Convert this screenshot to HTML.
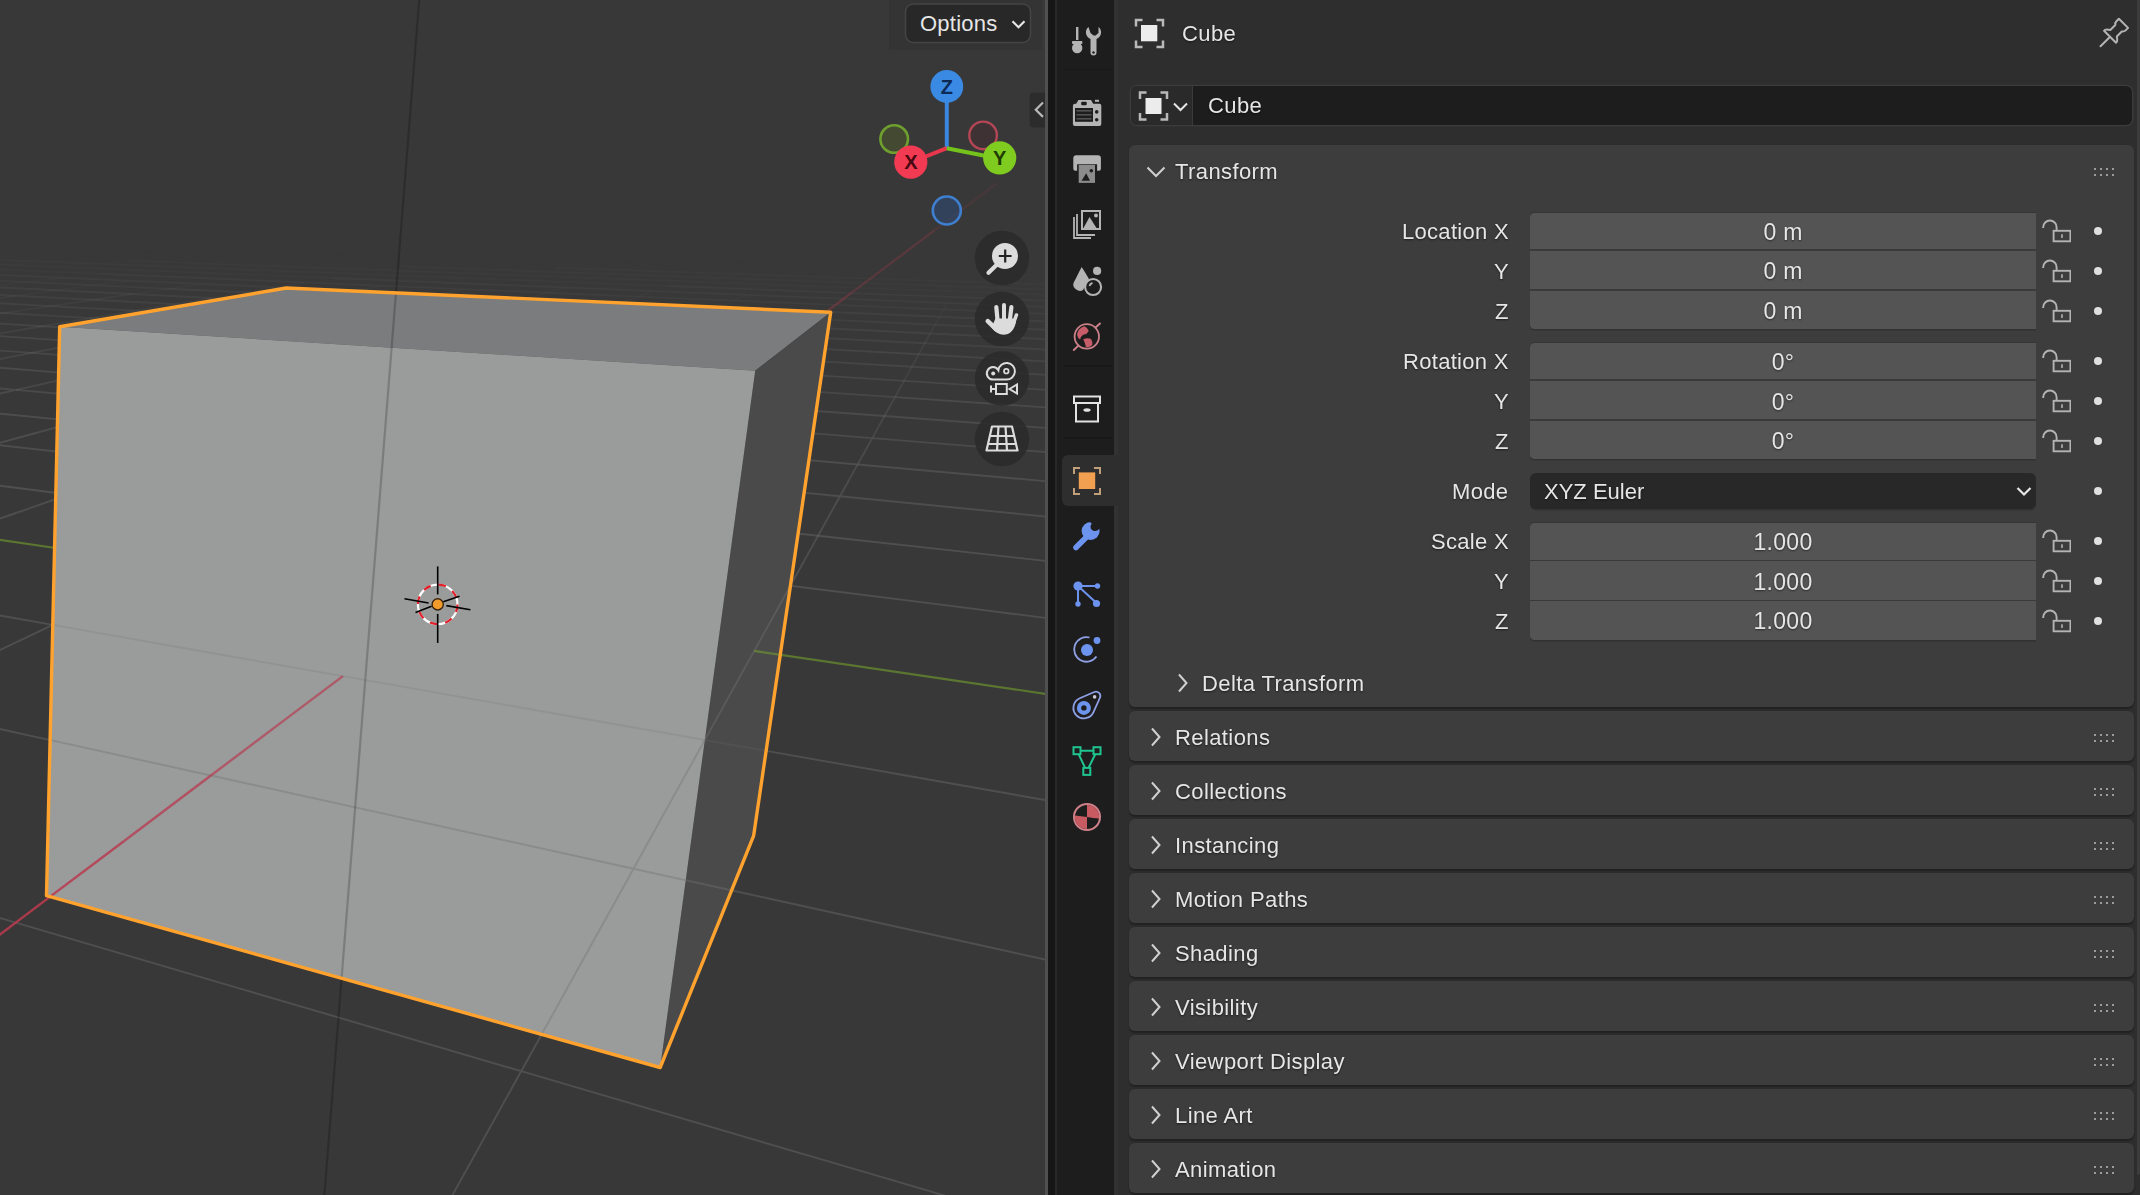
<!DOCTYPE html>
<html><head><meta charset="utf-8"><style>
*{margin:0;padding:0;box-sizing:border-box}
html,body{width:2140px;height:1195px;overflow:hidden;background:#161616;font-family:"Liberation Sans",sans-serif}
.t,.lbl,.val{will-change:transform}
#vp{position:absolute;left:0;top:0;width:1045px;height:1195px;overflow:hidden}
#edge{position:absolute;left:1045px;top:0;width:2.6px;height:1195px;background:#505050}
#gap{position:absolute;left:1047.6px;top:0;width:7px;height:1195px;background:#161616}
#gap2{position:absolute;left:1054.6px;top:0;width:2.6px;height:1195px;background:#282828}
#tabs{position:absolute;left:1057px;top:0;width:57px;height:1195px;background:#1d1d1d}
#props{position:absolute;left:1114px;top:0;width:1026px;height:1195px;background:#2e2e2e}
.t{position:absolute;color:#e6e6e6;font-size:22px;letter-spacing:0.4px;white-space:nowrap;text-shadow:0 1px 2px rgba(0,0,0,.55)}
.lbl{position:absolute;color:#e6e6e6;font-size:22px;letter-spacing:0.3px;white-space:nowrap;height:40px;line-height:41.5px;text-shadow:0 1px 2px rgba(0,0,0,.55)}
.panel{position:absolute;left:1129px;width:1005px;background:#3d3d3d;border-radius:6px;box-shadow:0 1.5px 1.5px rgba(0,0,0,.28)}
.fld{position:absolute;left:1530px;width:506px;background:#545454;border-radius:4.5px 0 0 4.5px;box-shadow:0 -1px 0 rgba(0,0,0,.12),0 1.5px 0 rgba(0,0,0,.18)}
.div{position:absolute;left:1530px;width:506px;height:1.8px;background:#3a3a3a}
.val{position:absolute;left:1530px;width:506px;height:40px;line-height:39.5px;text-align:center;color:#e6e6e6;font-size:23px;letter-spacing:0.3px;text-shadow:0 1px 2px rgba(0,0,0,.5)}
.dot{position:absolute;width:8px;height:8px;border-radius:4px;background:#e0e0e0}
.grip{position:absolute;width:22px;height:8px}
</style></head><body>
<div id="vp"><svg width="1045" height="1195" viewBox="0 0 1045 1195" style="position:absolute;left:0;top:0">
<defs><clipPath id="cubeclip"><polygon points="59.7,326.7 286.3,288.0 830.7,312.3 753.6,835.9 660.2,1067.5 46.5,895.7"/></clipPath></defs>
<rect width="1045" height="1195" fill="#383838"/>
<g stroke="#727272" stroke-width="1.9" fill="none"><path d="M473.0 254.2L599.2 258.1M599.2 258.1L736.4 262.4M736.4 262.4L885.9 267.0M885.9 267.0L1049.5 272.0M1049.5 272.0L1229.3 277.6M226.7 249.7L337.0 253.2M337.0 253.2L456.3 257.0M456.3 257.0L585.8 261.1M585.8 261.1L726.9 265.6M726.9 265.6L881.1 270.6M881.1 270.6L1050.3 276.0M1050.3 276.0L1237.0 282.0M99.6 248.7L203.9 252.2M203.9 252.2L316.5 255.9M316.5 255.9L438.7 259.9M438.7 259.9L571.6 264.4M571.6 264.4L716.8 269.2M716.8 269.2L875.9 274.4M875.9 274.4L1051.3 280.3M1051.3 280.3L1245.3 286.7M-24.9 247.8L73.4 251.2M73.4 251.2L179.7 254.8M179.7 254.8L294.8 258.8M294.8 258.8L419.9 263.1M419.9 263.1L556.4 267.8M-54.4 250.2L45.7 253.8M45.7 253.8L154.0 257.7M154.0 257.7L271.7 261.9M271.7 261.9L399.9 266.4M-85.5 252.7L16.3 256.5M16.3 256.5L126.8 260.6M-118.5 255.4L-14.9 259.5M8.1 264.9L-62.9 272.1M66.8 267.2L33.7 270.9M33.7 270.9L-1.7 274.8M-1.7 274.8L-39.8 279.0M128.3 269.7L96.5 273.6M96.5 273.6L62.5 277.7M247.1 265.1L192.6 272.4M192.6 272.4L162.5 276.4M162.5 276.4L130.0 280.7M311.3 267.5L260.2 275.1M260.2 275.1L231.7 279.3M231.7 279.3L201.1 283.8M378.5 270.0L355.6 273.9M355.6 273.9L331.0 278.0M331.0 278.0L304.6 282.4M448.9 272.6L428.0 276.7M428.0 276.7L405.5 281.0M405.5 281.0L381.3 285.7M522.8 275.4L504.1 279.6M504.1 279.6L484.0 284.2M484.0 284.2L462.2 289.1M600.3 278.3L584.1 282.7M584.1 282.7L566.6 287.5M681.9 281.3L668.4 286.0M668.4 286.0L653.8 291.1M767.7 284.5L757.3 289.4M757.3 289.4L746.1 294.8M959.0 281.6L953.6 291.4M953.6 291.4L950.5 296.9M950.5 296.9L947.2 303.0M1052.3 284.8L1054.5 295.2M1054.5 295.2L1055.8 301.0M1055.8 301.0L1057.2 307.4" stroke-opacity="0.021"/>
<path d="M556.4 267.8L706.0 272.9M706.0 272.9L870.4 278.6M870.4 278.6L1052.3 284.8M1052.3 284.8L1254.3 291.8M399.9 266.4L540.2 271.5M540.2 271.5L694.3 277.0M694.3 277.0L777.3 279.9M777.3 279.9L864.5 283.1M864.5 283.1L956.4 286.3M956.4 286.3L1053.3 289.8M1053.3 289.8L1155.7 293.5M126.8 260.6L247.1 265.1M247.1 265.1L378.5 270.0M378.5 270.0L448.9 272.6M448.9 272.6L522.8 275.4M522.8 275.4L600.3 278.3M600.3 278.3L681.9 281.3M681.9 281.3L767.7 284.5M767.7 284.5L858.1 287.9M858.1 287.9L953.6 291.4M953.6 291.4L1054.5 295.2M1054.5 295.2L1161.4 299.2M-14.9 259.5L97.8 263.8M97.8 263.8L220.8 268.6M220.8 268.6L286.6 271.2M286.6 271.2L355.6 273.9M355.6 273.9L428.0 276.7M428.0 276.7L504.1 279.6M504.1 279.6L584.1 282.7M584.1 282.7L668.4 286.0M-48.1 262.6L66.8 267.2M66.8 267.2L128.3 269.7M128.3 269.7L192.6 272.4M192.6 272.4L260.2 275.1M260.2 275.1L331.0 278.0M-26.2 268.3L33.7 270.9M33.7 270.9L96.5 273.6M-62.9 272.1L-1.7 274.8M62.5 277.7L25.9 282.1M25.9 282.1L-13.6 286.8M-13.6 286.8L-56.4 292.0M130.0 280.7L95.1 285.3M95.1 285.3L57.3 290.3M57.3 290.3L16.3 295.8M201.1 283.8L168.1 288.7M168.1 288.7L132.2 294.0M304.6 282.4L276.0 287.2M276.0 287.2L245.1 292.3M245.1 292.3L211.6 298.0M381.3 285.7L355.1 290.7M355.1 290.7L326.6 296.2M462.2 289.1L438.6 294.4M438.6 294.4L413.0 300.2M566.6 287.5L547.7 292.7M547.7 292.7L527.1 298.4M527.1 298.4L504.6 304.5M653.8 291.1L638.1 296.6M638.1 296.6L620.9 302.5M620.9 302.5L602.1 309.1M746.1 294.8L733.8 300.6M733.8 300.6L720.5 307.0M947.2 303.0L943.6 309.5M943.6 309.5L939.6 316.7M1057.2 307.4L1058.7 314.4M1058.7 314.4L1060.4 322.1" stroke-opacity="0.063"/>
<path d="M668.4 286.0L757.3 289.4M757.3 289.4L851.2 293.1M851.2 293.1L950.5 296.9M950.5 296.9L1055.8 301.0M1055.8 301.0L1167.5 305.4M331.0 278.0L405.5 281.0M405.5 281.0L484.0 284.2M484.0 284.2L566.6 287.5M566.6 287.5L653.8 291.1M653.8 291.1L746.1 294.8M746.1 294.8L843.7 298.8M843.7 298.8L947.2 303.0M947.2 303.0L1057.2 307.4M1057.2 307.4L1174.2 312.2M96.5 273.6L162.5 276.4M162.5 276.4L231.7 279.3M231.7 279.3L304.6 282.4M304.6 282.4L381.3 285.7M381.3 285.7L462.2 289.1M462.2 289.1L547.7 292.7M547.7 292.7L638.1 296.6M638.1 296.6L733.8 300.6M733.8 300.6L835.5 304.9M835.5 304.9L943.6 309.5M943.6 309.5L1058.7 314.4M1058.7 314.4L1181.6 319.6M-1.7 274.8L62.5 277.7M62.5 277.7L130.0 280.7M130.0 280.7L201.1 283.8M201.1 283.8L276.0 287.2M276.0 287.2L355.1 290.7M-39.8 279.0L25.9 282.1M25.9 282.1L95.1 285.3M95.1 285.3L168.1 288.7M-80.8 283.5L-13.6 286.8M16.3 295.8L-28.4 301.7M132.2 294.0L93.3 299.8M93.3 299.8L50.8 306.1M50.8 306.1L4.2 313.0M211.6 298.0L175.0 304.1M175.0 304.1L135.0 310.8M326.6 296.2L295.7 302.1M295.7 302.1L261.8 308.6M261.8 308.6L224.7 315.8M413.0 300.2L385.0 306.5M385.0 306.5L354.4 313.5M504.6 304.5L480.1 311.2M480.1 311.2L453.1 318.6M602.1 309.1L581.4 316.2M581.4 316.2L558.7 324.2M720.5 307.0L705.9 313.9M705.9 313.9L689.8 321.6M939.6 316.7L935.1 324.7M935.1 324.7L930.3 333.5M1060.4 322.1L1062.2 330.6M1062.2 330.6L1064.3 340.1" stroke-opacity="0.105"/>
<path d="M355.1 290.7L438.6 294.4M438.6 294.4L527.1 298.4M527.1 298.4L620.9 302.5M620.9 302.5L720.5 307.0M720.5 307.0L826.5 311.7M826.5 311.7L939.6 316.7M939.6 316.7L1060.4 322.1M1060.4 322.1L1189.8 327.9M168.1 288.7L245.1 292.3M245.1 292.3L326.6 296.2M326.6 296.2L413.0 300.2M413.0 300.2L504.6 304.5M504.6 304.5L602.1 309.1M602.1 309.1L705.9 313.9M705.9 313.9L816.6 319.1M816.6 319.1L935.1 324.7M935.1 324.7L1062.2 330.6M1062.2 330.6L1198.8 337.1M-13.6 286.8L57.3 290.3M57.3 290.3L132.2 294.0M132.2 294.0L211.6 298.0M211.6 298.0L295.7 302.1M295.7 302.1L385.0 306.5M-56.4 292.0L16.3 295.8M16.3 295.8L93.3 299.8M4.2 313.0L-47.0 320.6M135.0 310.8L91.0 318.1M91.0 318.1L42.5 326.3M224.7 315.8L183.8 323.6M354.4 313.5L320.6 321.1M320.6 321.1L283.3 329.5M453.1 318.6L423.3 326.8M423.3 326.8L390.2 335.9M558.7 324.2L533.5 332.9M689.8 321.6L671.9 330.1M671.9 330.1L652.1 339.5M930.3 333.5L924.8 343.3M924.8 343.3L918.7 354.3M1064.3 340.1L1066.6 350.7" stroke-opacity="0.147"/>
<path d="M385.0 306.5L480.1 311.2M480.1 311.2L581.4 316.2M581.4 316.2L689.8 321.6M689.8 321.6L805.7 327.3M805.7 327.3L930.3 333.5M930.3 333.5L1064.3 340.1M1064.3 340.1L1209.0 347.3M93.3 299.8L175.0 304.1M175.0 304.1L261.8 308.6M261.8 308.6L354.4 313.5M354.4 313.5L453.1 318.6M453.1 318.6L558.7 324.2M558.7 324.2L671.9 330.1M671.9 330.1L793.6 336.5M793.6 336.5L924.8 343.3M924.8 343.3L1066.6 350.7M-28.4 301.7L50.8 306.1M50.8 306.1L135.0 310.8M135.0 310.8L224.7 315.8M224.7 315.8L320.6 321.1M-77.1 308.2L4.2 313.0M4.2 313.0L91.0 318.1M42.5 326.3L-11.4 335.3M-11.4 335.3L-71.5 345.3M183.8 323.6L138.5 332.3M138.5 332.3L88.0 342.1M283.3 329.5L241.8 338.9M241.8 338.9L195.4 349.4M390.2 335.9L353.3 346.0M533.5 332.9L505.5 342.7M505.5 342.7L474.0 353.6M652.1 339.5L630.0 350.1M630.0 350.1L605.0 361.9M918.7 354.3L911.8 366.8M911.8 366.8L904.0 380.9" stroke-opacity="0.189"/>
<path d="M320.6 321.1L423.3 326.8M423.3 326.8L533.5 332.9M533.5 332.9L652.1 339.5M652.1 339.5L780.1 346.6M780.1 346.6L918.7 354.3M918.7 354.3L1069.2 362.7M91.0 318.1L183.8 323.6M183.8 323.6L283.3 329.5M283.3 329.5L390.2 335.9M390.2 335.9L505.5 342.7M505.5 342.7L630.0 350.1M630.0 350.1L765.0 358.1M765.0 358.1L911.8 366.8M911.8 366.8L1072.1 376.3M-47.0 320.6L42.5 326.3M42.5 326.3L138.5 332.3M138.5 332.3L241.8 338.9M-103.7 329.0L-11.4 335.3M88.0 342.1L31.4 352.9M31.4 352.9L-32.4 365.2M195.4 349.4L143.2 361.2M353.3 346.0L311.9 357.3M311.9 357.3L265.0 370.2M474.0 353.6L438.5 366.0M438.5 366.0L398.1 380.0M605.0 361.9L576.7 375.4M904.0 380.9L895.0 397.1" stroke-opacity="0.231"/>
<path d="M241.8 338.9L353.3 346.0M353.3 346.0L474.0 353.6M474.0 353.6L605.0 361.9M605.0 361.9L747.8 371.0M747.8 371.0L904.0 380.9M904.0 380.9L1075.5 391.8M-11.4 335.3L88.0 342.1M88.0 342.1L195.4 349.4M195.4 349.4L311.9 357.3M311.9 357.3L438.5 366.0M438.5 366.0L576.7 375.4M576.7 375.4L728.2 385.8M728.2 385.8L895.0 397.1M-71.5 345.3L31.4 352.9M31.4 352.9L143.2 361.2M143.2 361.2L84.0 374.6M84.0 374.6L16.2 389.9M265.0 370.2L211.4 384.9M211.4 384.9L181.8 393.0M398.1 380.0L351.7 396.2M351.7 396.2L325.9 405.2M576.7 375.4L544.3 390.8M544.3 390.8L506.9 408.7M895.0 397.1L884.5 416.0M884.5 416.0L878.6 426.6M878.6 426.6L872.3 438.1" stroke-opacity="0.273"/>
<path d="M895.0 397.1L1079.4 409.7M143.2 361.2L265.0 370.2M265.0 370.2L398.1 380.0M398.1 380.0L544.3 390.8M544.3 390.8L705.6 402.8M705.6 402.8L792.7 409.2M792.7 409.2L884.5 416.0M884.5 416.0L981.5 423.2M981.5 423.2L1084.0 430.7M-32.4 365.2L84.0 374.6M84.0 374.6L211.4 384.9M211.4 384.9L279.9 390.4M279.9 390.4L351.7 396.2M351.7 396.2L427.3 402.3M427.3 402.3L506.9 408.7M506.9 408.7L590.8 415.4M590.8 415.4L679.4 422.6M679.4 422.6L773.0 430.1M773.0 430.1L872.3 438.1M872.3 438.1L977.5 446.6M977.5 446.6L1089.4 455.6M-45.8 384.4L16.2 389.9M16.2 389.9L81.3 395.7M81.3 395.7L149.8 401.8M16.2 389.9L-21.5 398.4M181.8 393.0L149.8 401.8M149.8 401.8L115.4 411.2M115.4 411.2L78.1 421.4M78.1 421.4L37.7 432.5M325.9 405.2L298.0 414.9M298.0 414.9L267.8 425.4M267.8 425.4L234.9 436.8M506.9 408.7L485.9 418.7M485.9 418.7L463.1 429.5M463.1 429.5L438.4 441.3M438.4 441.3L411.3 454.2M872.3 438.1L865.3 450.7M865.3 450.7L857.6 464.5M857.6 464.5L849.2 479.6" stroke-opacity="0.315"/>
<path d="M149.8 401.8L222.0 408.1M222.0 408.1L298.0 414.9M298.0 414.9L378.3 422.0M378.3 422.0L463.1 429.5M463.1 429.5L553.0 437.5M553.0 437.5L648.4 445.9M648.4 445.9L749.7 454.9M749.7 454.9L857.6 464.5M857.6 464.5L972.8 474.7M972.8 474.7L1095.9 485.6M-62.1 407.6L6.1 414.3M6.1 414.3L78.1 421.4M78.1 421.4L154.3 428.9M154.3 428.9L234.9 436.8M234.9 436.8L320.4 445.2M320.4 445.2L411.3 454.2M411.3 454.2L508.1 463.7M508.1 463.7L611.3 473.8M611.3 473.8L721.7 484.7M721.7 484.7L840.0 496.3M840.0 496.3L967.0 508.8M967.0 508.8L1103.9 522.3M37.7 432.5L-6.4 444.6M-6.4 444.6L-54.5 457.8M-82.1 436.2L-6.4 444.6M-6.4 444.6L74.1 453.5M74.1 453.5L159.8 462.9M159.8 462.9L251.3 473.0M251.3 473.0L349.0 483.9M234.9 436.8L199.1 449.3M199.1 449.3L159.8 462.9M159.8 462.9L116.7 478.0M116.7 478.0L69.0 494.5M69.0 494.5L16.1 513.0M411.3 454.2L381.6 468.3M381.6 468.3L349.0 483.9M349.0 483.9L312.8 501.1M312.8 501.1L272.6 520.2M849.2 479.6L840.0 496.3M840.0 496.3L829.6 514.9M829.6 514.9L818.1 535.7M818.1 535.7L805.1 559.1" stroke-opacity="0.357"/>
<path d="M349.0 483.9L453.7 495.4M453.7 495.4L566.2 507.9M566.2 507.9L687.3 521.3M687.3 521.3L818.1 535.7M818.1 535.7L959.9 551.4M959.9 551.4L1113.9 568.5M16.1 513.0L-43.1 533.5M-22.2 483.0L69.0 494.5M69.0 494.5L167.0 506.9M167.0 506.9L272.6 520.2M272.6 520.2L386.5 534.6M386.5 534.6L509.9 550.2M509.9 550.2L644.1 567.2M644.1 567.2L790.4 585.7M790.4 585.7L950.7 605.9M950.7 605.9L1126.9 628.2M272.6 520.2L227.5 541.7M227.5 541.7L176.7 565.9M176.7 565.9L118.9 593.4M118.9 593.4L52.8 624.9M52.8 624.9L-23.8 661.3M-71.7 602.9L52.8 624.9M52.8 624.9L190.3 649.2M190.3 649.2L342.9 676.1M342.9 676.1L513.3 706.2M513.3 706.2L704.8 740.0M704.8 740.0L921.6 778.3M921.6 778.3L1169.1 822.0M805.1 559.1L790.4 585.7M790.4 585.7L773.6 616.0M773.6 616.0L754.2 650.9M754.2 650.9L731.6 691.8M731.6 691.8L704.8 740.0M704.8 740.0L672.7 797.9M672.7 797.9L633.5 868.7M633.5 868.7L584.4 957.3M584.4 957.3L521.2 1071.2M521.2 1071.2L436.9 1223.1M-113.4 704.0L38.8 737.6M38.8 737.6L210.9 775.5M210.9 775.5L407.3 818.9M407.3 818.9L633.5 868.7M633.5 868.7L896.6 926.8M896.6 926.8L1206.7 995.2M-179.9 865.2L15.7 922.6M15.7 922.6L246.0 990.3M246.0 990.3L521.2 1071.2M521.2 1071.2L855.7 1169.4M855.7 1169.4L1271.1 1291.5" stroke-opacity="0.399"/></g>
<path d="M998.7 181.9L998.6 182.0M998.6 182.0L998.5 182.1M998.5 182.1L998.4 182.1M998.4 182.1L998.4 182.2M998.4 182.2L998.3 182.3M998.3 182.3L998.2 182.3M998.2 182.3L998.1 182.4M998.1 182.4L998.0 182.5M998.0 182.5L997.9 182.5M997.9 182.5L997.8 182.6M997.8 182.6L997.7 182.7M997.7 182.7L997.6 182.7M997.6 182.7L997.5 182.8M997.5 182.8L997.4 182.9M997.4 182.9L997.4 183.0M997.4 183.0L997.3 183.0M997.3 183.0L997.2 183.1M997.2 183.1L997.1 183.2M997.1 183.2L997.0 183.2M997.0 183.2L996.9 183.3M996.9 183.3L996.8 183.4M996.8 183.4L996.7 183.5M996.7 183.5L996.6 183.5M996.6 183.5L996.5 183.6M996.5 183.6L996.4 183.7M996.4 183.7L996.3 183.8M996.3 183.8L996.2 183.8" stroke="#c03a50" stroke-width="2.4" stroke-opacity="0.045" fill="none"/>
<path d="M996.2 183.8L996.1 183.9M996.1 183.9L996.0 184.0M996.0 184.0L995.9 184.1M995.9 184.1L995.8 184.2M995.8 184.2L995.7 184.2M995.7 184.2L995.6 184.3M995.6 184.3L995.4 184.4M995.4 184.4L995.3 184.5M995.3 184.5L995.2 184.6M995.2 184.6L995.1 184.6M995.1 184.6L995.0 184.7M995.0 184.7L994.9 184.8M994.9 184.8L994.8 184.9M994.8 184.9L994.7 185.0M994.7 185.0L994.6 185.1M994.6 185.1L994.5 185.1M994.5 185.1L994.3 185.2M994.3 185.2L994.2 185.3M994.2 185.3L994.1 185.4M994.1 185.4L994.0 185.5M994.0 185.5L993.9 185.6M993.9 185.6L993.7 185.7M993.7 185.7L993.6 185.8M993.6 185.8L993.5 185.9M993.5 185.9L993.4 186.0M993.4 186.0L993.3 186.0M993.3 186.0L993.1 186.1M993.1 186.1L993.0 186.2M993.0 186.2L992.9 186.3M992.9 186.3L992.8 186.4M992.8 186.4L992.6 186.5M992.6 186.5L992.5 186.6M992.5 186.6L992.4 186.7M992.4 186.7L992.2 186.8M992.2 186.8L992.1 186.9M992.1 186.9L992.0 187.0M992.0 187.0L991.8 187.1M991.8 187.1L991.7 187.2M991.7 187.2L991.6 187.3M991.6 187.3L991.4 187.4M991.4 187.4L991.3 187.5M991.3 187.5L991.2 187.6M991.2 187.6L991.0 187.7M991.0 187.7L990.9 187.8M990.9 187.8L990.7 187.9M990.7 187.9L990.6 188.1M990.6 188.1L990.4 188.2M990.4 188.2L990.3 188.3M990.3 188.3L990.2 188.4M990.2 188.4L990.0 188.5M990.0 188.5L989.9 188.6M989.9 188.6L989.7 188.7M989.7 188.7L989.5 188.8M989.5 188.8L989.4 189.0M989.4 189.0L989.2 189.1M989.2 189.1L989.1 189.2M989.1 189.2L988.9 189.3M988.9 189.3L988.8 189.4M988.8 189.4L988.6 189.6M988.6 189.6L988.4 189.7M988.4 189.7L988.3 189.8M988.3 189.8L988.1 189.9M988.1 189.9L987.9 190.1M987.9 190.1L987.8 190.2M987.8 190.2L987.6 190.3M987.6 190.3L987.4 190.4M987.4 190.4L987.3 190.6M987.3 190.6L987.1 190.7M987.1 190.7L986.9 190.8M986.9 190.8L986.7 191.0M986.7 191.0L986.6 191.1M986.6 191.1L986.4 191.2M986.4 191.2L986.2 191.4M986.2 191.4L986.0 191.5M986.0 191.5L985.8 191.6M985.8 191.6L985.6 191.8M985.6 191.8L985.4 191.9M985.4 191.9L985.3 192.1M985.3 192.1L985.1 192.2M985.1 192.2L984.9 192.4M984.9 192.4L984.7 192.5M984.7 192.5L984.5 192.7M984.5 192.7L984.3 192.8M984.3 192.8L984.1 193.0M984.1 193.0L983.9 193.1M983.9 193.1L983.7 193.3M983.7 193.3L983.4 193.4M983.4 193.4L983.2 193.6M983.2 193.6L983.0 193.8M983.0 193.8L982.8 193.9M982.8 193.9L982.6 194.1M982.6 194.1L982.4 194.3M982.4 194.3L982.1 194.4M982.1 194.4L981.9 194.6M981.9 194.6L981.7 194.8M981.7 194.8L981.5 194.9M981.5 194.9L981.2 195.1M981.2 195.1L981.0 195.3M981.0 195.3L980.8 195.5M980.8 195.5L980.5 195.6M980.5 195.6L980.3 195.8M980.3 195.8L980.0 196.0M980.0 196.0L979.8 196.2M979.8 196.2L979.5 196.4M979.5 196.4L979.3 196.6M979.3 196.6L979.0 196.8M979.0 196.8L978.8 197.0M978.8 197.0L978.5 197.2M978.5 197.2L978.3 197.4M978.3 197.4L978.0 197.6M978.0 197.6L977.7 197.8M977.7 197.8L977.4 198.0M977.4 198.0L977.2 198.2M977.2 198.2L976.9 198.4M976.9 198.4L976.6 198.6M976.6 198.6L976.3 198.8M976.3 198.8L976.0 199.0M976.0 199.0L975.7 199.2M975.7 199.2L975.4 199.5M975.4 199.5L975.2 199.7M975.2 199.7L974.8 199.9M974.8 199.9L974.5 200.1M974.5 200.1L974.2 200.4M974.2 200.4L973.9 200.6M973.9 200.6L973.6 200.9M973.6 200.9L973.3 201.1M973.3 201.1L973.0 201.3M973.0 201.3L972.6 201.6M972.6 201.6L972.3 201.8M972.3 201.8L971.9 202.1M971.9 202.1L971.6 202.4M971.6 202.4L971.3 202.6M971.3 202.6L970.9 202.9M970.9 202.9L970.6 203.2M970.6 203.2L970.2 203.4M970.2 203.4L969.8 203.7M969.8 203.7L969.5 204.0M969.5 204.0L969.1 204.3M969.1 204.3L968.7 204.6M968.7 204.6L968.3 204.8M968.3 204.8L967.9 205.1M967.9 205.1L967.5 205.4M967.5 205.4L967.1 205.7M967.1 205.7L966.7 206.0M966.7 206.0L966.3 206.4M966.3 206.4L965.9 206.7M965.9 206.7L965.5 207.0M965.5 207.0L965.0 207.3M965.0 207.3L964.6 207.6M964.6 207.6L964.2 208.0M964.2 208.0L963.7 208.3M963.7 208.3L963.2 208.7M963.2 208.7L962.8 209.0M962.8 209.0L962.3 209.4M962.3 209.4L961.8 209.7M961.8 209.7L961.3 210.1M961.3 210.1L960.9 210.5M960.9 210.5L960.4 210.8M960.4 210.8L959.8 211.2M959.8 211.2L959.3 211.6M959.3 211.6L958.8 212.0M958.8 212.0L958.3 212.4M958.3 212.4L957.7 212.8M957.7 212.8L957.2 213.2M957.2 213.2L956.6 213.6M956.6 213.6L956.1 214.1M956.1 214.1L955.5 214.5M955.5 214.5L954.9 215.0M954.9 215.0L954.3 215.4M954.3 215.4L953.7 215.9M953.7 215.9L953.1 216.3M953.1 216.3L952.4 216.8M952.4 216.8L951.8 217.3M951.8 217.3L951.2 217.8M951.2 217.8L950.5 218.3M950.5 218.3L949.8 218.8M949.8 218.8L949.1 219.3M949.1 219.3L948.4 219.8M948.4 219.8L947.7 220.4M947.7 220.4L947.0 220.9M947.0 220.9L946.3 221.5M946.3 221.5L945.5 222.0M945.5 222.0L944.7 222.6M944.7 222.6L944.0 223.2M944.0 223.2L943.2 223.8M943.2 223.8L942.4 224.4M942.4 224.4L941.5 225.0M941.5 225.0L940.7 225.7M940.7 225.7L939.8 226.3M939.8 226.3L938.9 227.0M938.9 227.0L938.0 227.7M938.0 227.7L937.1 228.3M937.1 228.3L936.2 229.1M936.2 229.1L935.2 229.8M935.2 229.8L934.3 230.5" stroke="#c03a50" stroke-width="2.4" stroke-opacity="0.135" fill="none"/>
<path d="M934.3 230.5L933.3 231.3M933.3 231.3L932.2 232.0M932.2 232.0L931.2 232.8M931.2 232.8L930.1 233.6M930.1 233.6L929.0 234.4M929.0 234.4L927.9 235.3M927.9 235.3L926.8 236.1M926.8 236.1L925.6 237.0M925.6 237.0L924.4 237.9M924.4 237.9L923.2 238.9M923.2 238.9L921.9 239.8M921.9 239.8L920.6 240.8M920.6 240.8L919.3 241.8M919.3 241.8L917.9 242.8M917.9 242.8L916.6 243.8M916.6 243.8L915.1 244.9M915.1 244.9L913.7 246.0M913.7 246.0L912.2 247.2M912.2 247.2L910.6 248.3M910.6 248.3L909.0 249.5M909.0 249.5L907.4 250.7M907.4 250.7L905.7 252.0M905.7 252.0L904.0 253.3M904.0 253.3L902.2 254.7M902.2 254.7L900.4 256.0M900.4 256.0L898.5 257.5M898.5 257.5L896.5 258.9M896.5 258.9L894.5 260.4M894.5 260.4L892.5 262.0M892.5 262.0L890.3 263.6M890.3 263.6L888.1 265.3M888.1 265.3L885.9 267.0M885.9 267.0L883.5 268.7M883.5 268.7L881.1 270.6M881.1 270.6L878.6 272.5M878.6 272.5L875.9 274.4M875.9 274.4L873.2 276.5M873.2 276.5L870.4 278.6M870.4 278.6L867.5 280.8M867.5 280.8L864.5 283.1M864.5 283.1L861.4 285.4M861.4 285.4L858.1 287.9M858.1 287.9L854.7 290.4M854.7 290.4L851.2 293.1" stroke="#c03a50" stroke-width="2.4" stroke-opacity="0.225" fill="none"/>
<path d="M851.2 293.1L847.5 295.9M847.5 295.9L843.7 298.8M843.7 298.8L839.7 301.8M839.7 301.8L835.5 304.9M835.5 304.9L831.1 308.2M831.1 308.2L826.5 311.7M826.5 311.7L821.7 315.3M821.7 315.3L816.6 319.1M816.6 319.1L811.3 323.1M811.3 323.1L805.7 327.3M805.7 327.3L799.9 331.8M799.9 331.8L793.6 336.5M793.6 336.5L787.1 341.4M787.1 341.4L780.1 346.6M780.1 346.6L772.8 352.2M772.8 352.2L765.0 358.1M765.0 358.1L756.7 364.3" stroke="#c03a50" stroke-width="2.4" stroke-opacity="0.315" fill="none"/>
<path d="M756.7 364.3L747.8 371.0M747.8 371.0L738.3 378.1M738.3 378.1L728.2 385.8M728.2 385.8L717.3 394.0M717.3 394.0L705.6 402.8M705.6 402.8L693.0 412.3M693.0 412.3L679.4 422.6M679.4 422.6L664.5 433.7M664.5 433.7L648.4 445.9" stroke="#c03a50" stroke-width="2.4" stroke-opacity="0.405" fill="none"/>
<path d="M648.4 445.9L630.7 459.2M630.7 459.2L611.3 473.8M611.3 473.8L589.9 490.0M589.9 490.0L566.2 507.9M566.2 507.9L539.7 527.8M539.7 527.8L509.9 550.2" stroke="#c03a50" stroke-width="2.4" stroke-opacity="0.495" fill="none"/>
<path d="M509.9 550.2L476.3 575.5M476.3 575.5L438.1 604.4M438.1 604.4L394.0 637.6" stroke="#c03a50" stroke-width="2.4" stroke-opacity="0.585" fill="none"/>
<path d="M394.0 637.6L342.9 676.1M342.9 676.1L282.7 721.4M282.7 721.4L210.9 775.5" stroke="#c03a50" stroke-width="2.4" stroke-opacity="0.675" fill="none"/>
<path d="M210.9 775.5L123.8 841.2" stroke="#c03a50" stroke-width="2.4" stroke-opacity="0.765" fill="none"/>
<path d="M123.8 841.2L15.7 922.6M15.7 922.6L-121.8 1026.2M-121.8 1026.2L-302.6 1162.5M-302.6 1162.5L-551.1 1349.7M-551.1 1349.7L-913.9 1623.1M-913.9 1623.1L-1493.7 2060.0M-1493.7 2060.0L-2567.9 2869.4" stroke="#c03a50" stroke-width="2.4" stroke-opacity="0.855" fill="none"/>
<path d="M-2129.2 226.3L-2125.9 226.8M-2125.9 226.8L-2122.7 227.3M-2122.7 227.3L-2119.4 227.8M-2119.4 227.8L-2116.0 228.3M-2116.0 228.3L-2112.6 228.8M-2112.6 228.8L-2109.1 229.3M-2109.1 229.3L-2105.6 229.8M-2105.6 229.8L-2102.0 230.3M-2102.0 230.3L-2098.4 230.9M-2098.4 230.9L-2094.7 231.4M-2094.7 231.4L-2091.0 232.0M-2091.0 232.0L-2087.2 232.5M-2087.2 232.5L-2083.4 233.1M-2083.4 233.1L-2079.5 233.7M-2079.5 233.7L-2075.5 234.2M-2075.5 234.2L-2071.4 234.8M-2071.4 234.8L-2067.3 235.4M-2067.3 235.4L-2063.2 236.1M-2063.2 236.1L-2058.9 236.7M-2058.9 236.7L-2054.6 237.3M-2054.6 237.3L-2050.2 238.0M-2050.2 238.0L-2045.8 238.6M-2045.8 238.6L-2041.3 239.3M-2041.3 239.3L-2036.7 240.0M-2036.7 240.0L-2032.0 240.7M-2032.0 240.7L-2027.2 241.4M-2027.2 241.4L-2022.4 242.1M-2022.4 242.1L-2017.4 242.8M-2017.4 242.8L-2012.4 243.5M-2012.4 243.5L-2007.3 244.3M-2007.3 244.3L-2002.1 245.1M-2002.1 245.1L-1996.8 245.8M-1996.8 245.8L-1991.4 246.6M-1991.4 246.6L-1985.9 247.4" stroke="#78a82a" stroke-width="2.2" stroke-opacity="0.128" fill="none"/>
<path d="M-1985.9 247.4L-1980.3 248.3M-1980.3 248.3L-1974.6 249.1M-1974.6 249.1L-1968.8 250.0M-1968.8 250.0L-1962.8 250.8M-1962.8 250.8L-1956.8 251.7M-1956.8 251.7L-1950.6 252.6M-1950.6 252.6L-1944.3 253.6M-1944.3 253.6L-1937.9 254.5M-1937.9 254.5L-1931.3 255.5M-1931.3 255.5L-1924.7 256.5M-1924.7 256.5L-1917.8 257.5M-1917.8 257.5L-1910.9 258.5M-1910.9 258.5L-1903.7 259.5M-1903.7 259.5L-1896.5 260.6M-1896.5 260.6L-1889.0 261.7M-1889.0 261.7L-1881.5 262.8M-1881.5 262.8L-1873.7 264.0M-1873.7 264.0L-1865.8 265.1M-1865.8 265.1L-1857.7 266.3M-1857.7 266.3L-1849.4 267.5M-1849.4 267.5L-1840.9 268.8M-1840.9 268.8L-1832.2 270.1M-1832.2 270.1L-1823.3 271.4M-1823.3 271.4L-1814.2 272.7M-1814.2 272.7L-1804.8 274.1M-1804.8 274.1L-1795.3 275.5M-1795.3 275.5L-1785.5 277.0M-1785.5 277.0L-1775.4 278.4M-1775.4 278.4L-1765.1 280.0M-1765.1 280.0L-1754.5 281.5M-1754.5 281.5L-1743.7 283.1M-1743.7 283.1L-1732.5 284.7M-1732.5 284.7L-1721.1 286.4M-1721.1 286.4L-1709.3 288.2M-1709.3 288.2L-1697.2 289.9M-1697.2 289.9L-1684.8 291.8M-1684.8 291.8L-1672.0 293.7M-1672.0 293.7L-1658.9 295.6M-1658.9 295.6L-1645.4 297.6M-1645.4 297.6L-1631.4 299.6M-1631.4 299.6L-1617.1 301.8M-1617.1 301.8L-1602.3 303.9M-1602.3 303.9L-1587.0 306.2M-1587.0 306.2L-1571.3 308.5M-1571.3 308.5L-1555.0 310.9" stroke="#78a82a" stroke-width="2.2" stroke-opacity="0.212" fill="none"/>
<path d="M-1555.0 310.9L-1538.2 313.4M-1538.2 313.4L-1520.9 315.9M-1520.9 315.9L-1502.9 318.6M-1502.9 318.6L-1484.4 321.3M-1484.4 321.3L-1465.2 324.1M-1465.2 324.1L-1445.3 327.0M-1445.3 327.0L-1424.7 330.1M-1424.7 330.1L-1403.3 333.2M-1403.3 333.2L-1381.2 336.5M-1381.2 336.5L-1358.2 339.9M-1358.2 339.9L-1334.2 343.4M-1334.2 343.4L-1309.4 347.1M-1309.4 347.1L-1283.5 350.9M-1283.5 350.9L-1256.5 354.8M-1256.5 354.8L-1228.4 359.0M-1228.4 359.0L-1199.1 363.3M-1199.1 363.3L-1168.4 367.8M-1168.4 367.8L-1136.4 372.5" stroke="#78a82a" stroke-width="2.2" stroke-opacity="0.297" fill="none"/>
<path d="M-1136.4 372.5L-1102.9 377.5M-1102.9 377.5L-1067.8 382.6M-1067.8 382.6L-1031.0 388.1M-1031.0 388.1L-992.3 393.7M-992.3 393.7L-951.7 399.7M-951.7 399.7L-909.0 406.0M-909.0 406.0L-863.9 412.7M-863.9 412.7L-816.3 419.7M-816.3 419.7L-766.1 427.1M-766.1 427.1L-712.9 434.9M27814.0 4635.8L55571.9 8723.4" stroke="#78a82a" stroke-width="2.2" stroke-opacity="0.383" fill="none"/>
<path d="M-712.9 434.9L-656.4 443.2M-656.4 443.2L-596.5 452.0M-596.5 452.0L-532.7 461.4M-532.7 461.4L-464.6 471.5M-464.6 471.5L-391.9 482.2M-391.9 482.2L-314.0 493.6M-314.0 493.6L-230.4 506.0M-230.4 506.0L-140.3 519.2M3727.2 1088.8L4420.7 1190.9M4420.7 1190.9L5285.6 1318.2M5285.6 1318.2L6394.3 1481.5M6394.3 1481.5L7866.8 1698.3M7866.8 1698.3L9917.3 2000.3M9917.3 2000.3L12969.2 2449.7M12969.2 2449.7L17993.4 3189.6M17993.4 3189.6L27814.0 4635.8" stroke="#78a82a" stroke-width="2.2" stroke-opacity="0.468" fill="none"/>
<path d="M-140.3 519.2L-43.1 533.5M-43.1 533.5L62.2 549.0M62.2 549.0L176.7 565.9M176.7 565.9L301.5 584.3M301.5 584.3L438.1 604.4M438.1 604.4L588.3 626.5M588.3 626.5L754.2 650.9M754.2 650.9L938.5 678.1M938.5 678.1L1144.4 708.4M1144.4 708.4L1375.8 742.5M1375.8 742.5L1637.9 781.1M1637.9 781.1L1937.2 825.1M1937.2 825.1L2282.1 876.0M2282.1 876.0L2684.2 935.2M2684.2 935.2L3158.7 1005.0M3158.7 1005.0L3727.2 1088.8" stroke="#78a82a" stroke-width="2.2" stroke-opacity="0.552" fill="none"/>
<polygon points="59.7,326.7 286.3,288.0 830.7,312.3 755.2,370.7" fill="#7b7c7d"/>
<polygon points="755.2,370.7 830.7,312.3 753.6,835.9 660.2,1067.5" fill="#4a4a4b"/>
<polygon points="59.7,326.7 755.2,370.7 660.2,1067.5 46.5,895.7" fill="#9a9b9b"/>
<g clip-path="url(#cubeclip)" stroke="#727272" stroke-width="1.9" fill="none"><path d="M885.9 267.0L1049.5 272.0M1049.5 272.0L1229.3 277.6M881.1 270.6L1050.3 276.0M1050.3 276.0L1237.0 282.0M875.9 274.4L1051.3 280.3M1051.3 280.3L1245.3 286.7M959.0 281.6L953.6 291.4M953.6 291.4L950.5 296.9M950.5 296.9L947.2 303.0M1052.3 284.8L1054.5 295.2M1054.5 295.2L1055.8 301.0M1055.8 301.0L1057.2 307.4" stroke-opacity="0.021"/>
<path d="M870.4 278.6L1052.3 284.8M1052.3 284.8L1254.3 291.8M956.4 286.3L1053.3 289.8M1053.3 289.8L1155.7 293.5M953.6 291.4L1054.5 295.2M1054.5 295.2L1161.4 299.2M947.2 303.0L943.6 309.5M943.6 309.5L939.6 316.7M1057.2 307.4L1058.7 314.4M1058.7 314.4L1060.4 322.1" stroke-opacity="0.063"/>
<path d="M950.5 296.9L1055.8 301.0M1055.8 301.0L1167.5 305.4M947.2 303.0L1057.2 307.4M1057.2 307.4L1174.2 312.2M943.6 309.5L1058.7 314.4M1058.7 314.4L1181.6 319.6M939.6 316.7L935.1 324.7M935.1 324.7L930.3 333.5M1060.4 322.1L1062.2 330.6M1062.2 330.6L1064.3 340.1" stroke-opacity="0.105"/>
<path d="M939.6 316.7L1060.4 322.1M1060.4 322.1L1189.8 327.9M935.1 324.7L1062.2 330.6M1062.2 330.6L1198.8 337.1M930.3 333.5L924.8 343.3M924.8 343.3L918.7 354.3M1064.3 340.1L1066.6 350.7" stroke-opacity="0.147"/>
<path d="M930.3 333.5L1064.3 340.1M1064.3 340.1L1209.0 347.3M924.8 343.3L1066.6 350.7M-71.7 602.9L52.8 624.9M52.8 624.9L190.3 649.2M190.3 649.2L342.9 676.1M342.9 676.1L513.3 706.2M513.3 706.2L704.8 740.0M704.8 740.0L921.6 778.3M921.6 778.3L1169.1 822.0M918.7 354.3L911.8 366.8M911.8 366.8L904.0 380.9" stroke-opacity="0.189"/>
<path d="M918.7 354.3L1069.2 362.7M911.8 366.8L1072.1 376.3M904.0 380.9L895.0 397.1" stroke-opacity="0.231"/>
<path d="M904.0 380.9L1075.5 391.8M895.0 397.1L884.5 416.0M884.5 416.0L878.6 426.6M878.6 426.6L872.3 438.1" stroke-opacity="0.273"/>
<path d="M895.0 397.1L1079.4 409.7M884.5 416.0L981.5 423.2M981.5 423.2L1084.0 430.7M872.3 438.1L977.5 446.6M977.5 446.6L1089.4 455.6M872.3 438.1L865.3 450.7M865.3 450.7L857.6 464.5M857.6 464.5L849.2 479.6" stroke-opacity="0.315"/>
<path d="M857.6 464.5L972.8 474.7M972.8 474.7L1095.9 485.6M840.0 496.3L967.0 508.8M967.0 508.8L1103.9 522.3M849.2 479.6L840.0 496.3M840.0 496.3L829.6 514.9M829.6 514.9L818.1 535.7M818.1 535.7L805.1 559.1" stroke-opacity="0.357"/>
<path d="M818.1 535.7L959.9 551.4M959.9 551.4L1113.9 568.5M790.4 585.7L950.7 605.9M950.7 605.9L1126.9 628.2M52.8 624.9L-23.8 661.3M805.1 559.1L790.4 585.7M790.4 585.7L773.6 616.0M773.6 616.0L754.2 650.9M754.2 650.9L731.6 691.8M731.6 691.8L704.8 740.0M704.8 740.0L672.7 797.9M672.7 797.9L633.5 868.7M633.5 868.7L584.4 957.3M584.4 957.3L521.2 1071.2M521.2 1071.2L436.9 1223.1M-113.4 704.0L38.8 737.6M38.8 737.6L210.9 775.5M210.9 775.5L407.3 818.9M407.3 818.9L633.5 868.7M633.5 868.7L896.6 926.8M896.6 926.8L1206.7 995.2M-179.9 865.2L15.7 922.6M15.7 922.6L246.0 990.3M246.0 990.3L521.2 1071.2M521.2 1071.2L855.7 1169.4M855.7 1169.4L1271.1 1291.5" stroke-opacity="0.399"/><path d="M342.9 676.1L282.7 721.4M282.7 721.4L210.9 775.5" stroke="#b83a50" stroke-width="2.4" stroke-opacity="0.675" fill="none"/>
<path d="M210.9 775.5L123.8 841.2" stroke="#b83a50" stroke-width="2.4" stroke-opacity="0.765" fill="none"/>
<path d="M123.8 841.2L15.7 922.6M15.7 922.6L-121.8 1026.2M-121.8 1026.2L-302.6 1162.5M-302.6 1162.5L-551.1 1349.7M-551.1 1349.7L-913.9 1623.1M-913.9 1623.1L-1493.7 2060.0M-1493.7 2060.0L-2567.9 2869.4" stroke="#b83a50" stroke-width="2.4" stroke-opacity="0.855" fill="none"/><path d="M754.2 650.9L938.5 678.1M938.5 678.1L1144.4 708.4M1144.4 708.4L1375.8 742.5M1375.8 742.5L1637.9 781.1" stroke="#78a82a" stroke-width="2.2" stroke-opacity="0.520" fill="none"/></g>
<line x1="419.2" y1="0" x2="324.4" y2="1195" stroke="#000" stroke-opacity="0.2" stroke-width="2.2"/>
<polygon points="59.7,326.7 286.3,288.0 830.7,312.3 753.6,835.9 660.2,1067.5 46.5,895.7" fill="none" stroke="#ffa22e" stroke-width="3.4" stroke-linejoin="round"/>
<!-- 3D cursor -->
<g transform="translate(437.7,604.4)">
  <circle r="19.8" fill="none" stroke="#ffffff" stroke-width="2.2"/>
  <circle r="19.8" fill="none" stroke="#e0202a" stroke-width="2.2" stroke-dasharray="7.775 7.775" stroke-dashoffset="0"/>
  <g stroke="#000" stroke-width="1.6">
    <line x1="0" y1="-38" x2="0" y2="-10"/><line x1="0" y1="9.5" x2="0" y2="38.5"/>
    <line x1="-33.2" y1="-5.6" x2="-9.1" y2="-1.4"/><line x1="8.6" y1="1.2" x2="32.7" y2="5.3"/>
    <line x1="-22.2" y1="8" x2="-6.1" y2="1.9"/><line x1="5.6" y1="-2.6" x2="21.8" y2="-8.2"/>
  </g>
  <circle r="5.6" fill="#f39c2c" stroke="#3a2410" stroke-width="1.4"/>
</g>
<!-- gizmo -->
<g>
  <line x1="946.8" y1="148.2" x2="946.8" y2="100" stroke="#3b86e0" stroke-width="4"/>
  <line x1="946.8" y1="148.2" x2="922" y2="158" stroke="#e8364c" stroke-width="4"/>
  <line x1="946.8" y1="148.2" x2="986" y2="156" stroke="#74c21c" stroke-width="4"/>
  <circle cx="894.2" cy="139" r="13.8" fill="#4d5a2c" fill-opacity="0.55" stroke="#6f9f2e" stroke-width="2.6"/>
  <circle cx="983.1" cy="135.4" r="13.8" fill="#4a2c30" fill-opacity="0.45" stroke="#b44655" stroke-width="2.4"/>
  <circle cx="946.8" cy="210.5" r="14" fill="#2f4a73" fill-opacity="0.6" stroke="#3f7fd0" stroke-width="2.6"/>
  <circle cx="946.8" cy="86.5" r="16.4" fill="#3a8ae4"/>
  <circle cx="910.8" cy="162.1" r="16.6" fill="#f23b53"/>
  <circle cx="999.7" cy="157.9" r="16.6" fill="#7fcb1f"/>
  <text x="946.8" y="93.8" font-family="Liberation Sans" font-weight="bold" font-size="20" fill="#0c2a55" text-anchor="middle">Z</text>
  <text x="910.8" y="169.3" font-family="Liberation Sans" font-weight="bold" font-size="20" fill="#4a0812" text-anchor="middle">X</text>
  <text x="999.7" y="165.1" font-family="Liberation Sans" font-weight="bold" font-size="20" fill="#203a05" text-anchor="middle">Y</text>
</g>
<!-- nav buttons -->
<g fill="#2a2a2a" fill-opacity="0.85">
  <circle cx="1002" cy="258" r="27.2"/><circle cx="1002" cy="319" r="27.2"/>
  <circle cx="1002" cy="378.5" r="27.2"/><circle cx="1002" cy="439" r="27.2"/>
</g>
<g>
  <circle cx="1005" cy="256" r="13" fill="#dcdcdc"/>
  <line x1="988.5" y1="272.8" x2="996.5" y2="265" stroke="#dcdcdc" stroke-width="4.2" stroke-linecap="round"/>
  <path d="M998.8 256H1011.6M1005.2 249.5V262.5" stroke="#222" stroke-width="2.2"/>
  <g stroke="#dcdcdc" stroke-linecap="round" fill="none"><line x1="996.3" y1="307" x2="997.8" y2="323" stroke-width="4.2"/><line x1="1004" y1="305" x2="1004" y2="323" stroke-width="4"/><line x1="1011.4" y1="307" x2="1009.5" y2="323" stroke-width="4.2"/><line x1="1016.4" y1="315" x2="1012.5" y2="326" stroke-width="3.6"/><line x1="987.8" y1="321.2" x2="996" y2="329" stroke-width="4.6"/></g><path d="M995.5 318.5 H1014.5 L1016 322 Q1013 334.7 1003.5 334.7 Q997 334.7 991.5 327.5 Z" fill="#dcdcdc"/>
  <g fill="none" stroke="#dcdcdc" stroke-width="2">
   <path d="M993 379.5 A6.2 6.2 0 1 1 998.4 370.2 A8.3 8.3 0 1 1 1006.3 379.5 Z"/>
   <rect x="996" y="384" width="10.8" height="10" />
   <path d="M991 385.5v7M991 389h5M1009.5 389l7.5-4.5v9z"/>
  </g>
  <circle cx="993.2" cy="373.6" r="2" fill="#dcdcdc"/><circle cx="1006.3" cy="371.2" r="2.3" fill="none" stroke="#dcdcdc" stroke-width="1.7"/>
  <g fill="none" stroke="#dcdcdc" stroke-width="2.2" stroke-linejoin="round">
   <path d="M992 426.5H1012L1017.5 450.5H986.5Z"/>
   <path d="M989.5 436H1014.5M988 444H1016M998.5 426.5L997 450.5M1005.5 426.5L1007 450.5"/>
  </g>
</g>
<!-- header region + options -->
<rect x="889" y="0" width="153" height="50" fill="#000" fill-opacity="0.06"/>
<rect x="905.5" y="4" width="125" height="38.5" rx="8" fill="#282828" stroke="#444" stroke-width="1.5"/>
<text x="920" y="31.2" font-family="Liberation Sans" font-size="22" letter-spacing="0.25" fill="#e6e6e6">Options</text>
<path d="M1012.5 21.3l6 6 6-6" fill="none" stroke="#e6e6e6" stroke-width="2.2"/>
<!-- collapse tab -->
<rect x="1029.6" y="92.6" width="20" height="35" rx="4" fill="#2c2c2c"/>
<path d="M1043 102.5l-7.2 7.2 7.2 7.2" fill="none" stroke="#b8b8b8" stroke-width="2.2"/>
</svg>
</div>
<div id="edge"></div><div id="gap"></div><div id="gap2"></div>
<div id="tabs"></div>
<div id="props"></div><div style="position:absolute;left:1114px;top:0;width:3.5px;height:1195px;background:#323232"></div>
<div style="position:absolute;left:1063.5px;top:68.5px;width:48.5px;height:1.5px;background:#181818"></div><div style="position:absolute;left:1063.5px;top:365px;width:48.5px;height:1.5px;background:#181818"></div><div style="position:absolute;left:1063.5px;top:437px;width:48.5px;height:1.5px;background:#181818"></div><div style="position:absolute;left:1062px;top:455px;width:56px;height:51px;background:#2e2e2e;border-radius:6px 0 0 6px"></div><svg width="2140" height="1195" style="position:absolute;left:0;top:0;pointer-events:none"><g transform="translate(1087,41)"><g fill="#b4b4b4"><rect x="-11" y="-14" width="2.4" height="13"/><circle cx="-9.8" cy="7" r="5.2"/><rect x="-15" y="0" width="10.4" height="3" rx="1"/>
<path d="M1.5 -14 a7 7 0 0 0 2 12 v13.5 a3 3 0 0 0 6 0 v-13.5 a7 7 0 0 0 2 -12 v6 l-3 2.5 h-2 l-3 -2.5z"/></g><circle cx="6.5" cy="11.5" r="1.2" fill="#1d1d1d"/></g><g transform="translate(1087,112)"><path d="M-14.1 -6.2 a2 2 0 0 1 2 -2 h1.3 l2.2 -3.8 h12.6 l2.2 3.8 h6.1 a2 2 0 0 1 2 2 v18.2 a2 2 0 0 1 -2 2 h-24.4 a2 2 0 0 1 -2 -2z" fill="#b4b4b4"/><rect x="7.9" y="-12.2" width="4.1" height="2" fill="#b4b4b4"/>
<rect x="-5.8" y="-10.2" width="5.5" height="3.4" rx="1" fill="#1d1d1d"/><rect x="-12" y="-4" width="18" height="13.8" fill="#1d1d1d"/><g fill="#b4b4b4" opacity="0.35"><rect x="-10.5" y="-2" width="15" height="1.6"/><rect x="-10.5" y="2" width="15" height="1.6"/><rect x="-10.5" y="6" width="15" height="1.6"/></g>
<circle cx="9.7" cy="-0.1" r="1.8" fill="#1d1d1d"/><circle cx="9.7" cy="7.7" r="1.8" fill="#1d1d1d"/></g><g transform="translate(1087,168)"><path d="M-13.7 -9.7 a3 3 0 0 1 3 -3 h21.6 a3 3 0 0 1 3 3 v10.5 a2 2 0 0 1 -2 2 h-1.8 v-6.5 h-20 v6.5 h-1.8 a2 2 0 0 1 -2 -2z" fill="#b4b4b4"/><rect x="-8.3" y="-3.1" width="16.3" height="18" fill="#8c8c8c"/><path d="M-5.4 12.8 l4.6 -7.5 l3.8 7.5z" fill="#1d1d1d"/><circle cx="4.3" cy="2.8" r="1.8" fill="#1d1d1d"/></g><g transform="translate(1087,224)"><g fill="none" stroke="#b4b4b4" stroke-width="1.8"><path d="M-13 -7 v21 h17"/><path d="M-10 -10 v21 h18"/></g><rect x="-6" y="-14" width="20" height="20" fill="#b4b4b4"/><rect x="-4" y="-12" width="16" height="16" fill="#1d1d1d"/><path d="M-3.5 4 l6 -11 l7 11z" fill="#b4b4b4"/><circle cx="9" cy="-8.5" r="2" fill="#b4b4b4"/></g><g transform="translate(1087,280)"><path d="M-5.3 -13.1 Q-6 -12 -13.5 3 Q-15 8 -9 10.5 Q-6.5 11.5 -4 10 L2 -1 Q-2 -8 -5.3 -13.1z" fill="#b4b4b4"/><circle cx="10.1" cy="-9.1" r="4.1" fill="#b4b4b4"/><circle cx="6.1" cy="7" r="8" fill="#1d1d1d" stroke="#b4b4b4" stroke-width="2.1"/><path d="M2.5 6 a4 4 0 0 1 3 -3" fill="none" stroke="#b4b4b4" stroke-width="1.8"/></g><g transform="translate(1087,336.4)"><circle cx="-0.2" cy="0" r="12.2" fill="none" stroke="#c98088" stroke-width="1.8"/><path d="M-13.2 13.6 L-8.6 9.2 M8.8 -9.2 L13 -12.9" stroke="#c98088" stroke-width="2" stroke-linecap="round"/><path d="M-10 -2 Q-9 -8.5 -2.5 -10.2 Q1 -8.5 1.8 -5.5 Q0 -2.2 -3 -1.8 Q-6 -0.8 -6.8 3 Q-9.5 1.5 -10 -2Z M-3.8 2.8 Q0 1.2 3.8 2.3 Q6 5 5.2 8.8 Q3 11 -1 10.8 Q-1.8 6.5 -3.8 2.8Z" fill="#c85d6a"/></g><g transform="translate(1087,408)"><g fill="none" stroke="#e2e2e2" stroke-width="2"><rect x="-13" y="-11.5" width="26" height="6.5"/><path d="M-11 -5 v18.5 h22 v-18.5"/></g><ellipse cx="0" cy="2" rx="3.6" ry="1.8" fill="#e2e2e2"/></g><g transform="translate(1087,481)"><g fill="none" stroke="#c0a07a" stroke-width="2"><path d="M-13 -7 v-6 h6 M7 -13 h6 v6 M13 7 v6 h-6 M-7 13 h-6 v-6"/></g><rect x="-8.2" y="-8.6" width="16.4" height="16.6" fill="#f0a050"/></g><g transform="translate(1087,537)"><line x1="-11" y1="10.5" x2="1" y2="-1.5" stroke="#6c93ee" stroke-width="5.6" stroke-linecap="round"/><circle cx="3.6" cy="-6" r="9" fill="#6c93ee"/><circle cx="7.8" cy="-10.3" r="4.3" fill="#1d1d1d"/><path d="M7.8 -10.3 L14 -16.5 L16 -12 L10.5 -6.5Z M7.8 -10.3 L1.5 -16.5 L6 -18 L11 -13Z" fill="#1d1d1d"/></g><g transform="translate(1087,593)"><g stroke="#6c93ee" stroke-width="2"><line x1="-9" y1="-7" x2="10" y2="-7"/><line x1="-9" y1="-7" x2="-9" y2="11"/><line x1="-9" y1="-7" x2="9.5" y2="10"/></g><circle cx="-9" cy="-7" r="4.6" fill="#6c93ee"/><circle cx="10.5" cy="-7" r="2.7" fill="#6c93ee"/><circle cx="-9" cy="11" r="2.7" fill="#6c93ee"/><circle cx="9.5" cy="10.5" r="3.6" fill="#6c93ee"/></g><g transform="translate(1087,649)"><path d="M9.5 7.5 A12.3 12.3 0 1 1 2.5 -11.5" fill="none" stroke="#8fa0e6" stroke-width="1.8"/><circle cx="0" cy="1" r="6" fill="#6c93ee"/><circle cx="10" cy="-8.5" r="3.4" fill="#6c93ee"/></g><g transform="translate(1087,705)"><path d="M6.49 7.18 L12.93 -7.25 A4.3 4.3 0 0 0 7.31 -12.96 L-7.23 -6.76 A10.5 10.5 0 1 0 6.49 7.18 Z" fill="none" stroke="#8fa0e6" stroke-width="1.8"/><circle cx="-3.1" cy="2.9" r="7" fill="#6c93ee"/><circle cx="-3.1" cy="2.9" r="2.7" fill="#1d1d1d"/><circle cx="7.6" cy="-8.1" r="1.8" fill="#c8c8d8"/></g><g transform="translate(1087,761)"><path d="M-10 -10.3 H10 L-0.2 10.4Z" fill="none" stroke="#1fc48f" stroke-width="2"/><g fill="#1d1d1d" stroke="#1fc48f" stroke-width="2"><rect x="-13.5" y="-13.8" width="7" height="7"/><rect x="6.5" y="-13.8" width="7" height="7"/><rect x="-3.7" y="6.9" width="7" height="7"/></g></g><g transform="translate(1087,817)"><circle r="13" fill="#1d1d1d" stroke="#cf8088" stroke-width="2"/><path d="M0 -12 A12 12 0 0 1 12 1.5 Q6 1 0 0z M0 0 Q-6 -1 -12 -1.5 A12 12 0 0 0 0 12z" fill="#c85a62"/></g></svg><svg width="40" height="40" style="position:absolute;left:1130px;top:13px"><g fill="none" stroke="#b9b9b9" stroke-width="2.5"><path d="M6 13.5 V7 H12.5 M26.5 7 H33 V13.5 M33 27.5 V34 H26.5 M12.5 34 H6 V27.5"/></g><rect x="11" y="12" width="16.3" height="16.3" fill="#ececec"/></svg><div class="t" style="left:1182px;top:20.3px;line-height:28px">Cube</div><svg width="2140" height="60" style="position:absolute;left:0;top:0"><g transform="translate(2100.5,46.3) rotate(45)" fill="none" stroke="#b4b4b4" stroke-width="2" stroke-linejoin="round" stroke-linecap="round"><path d="M0 0 V-12.5"/><path d="M-8.5 -13.5 H8.5 Q9 -15.5 4.6 -18.5 V-25.5 Q6.5 -27 6.5 -29 V-32.5 H-6.5 V-29 Q-6.5 -27 -4.6 -25.5 V-18.5 Q-9 -15.5 -8.5 -13.5 Z"/></g></svg><div style="position:absolute;left:1130.5px;top:86px;width:1001.5px;height:38.5px;border-radius:6px;background:#1d1d1d;box-shadow:0 0 0 1.3px #3c3c3c"></div><div style="position:absolute;left:1130.5px;top:85.5px;width:62.5px;height:39px;border-radius:6px 0 0 6px;background:#2a2a2a;border-right:1.5px solid #3a3a3a"></div><svg width="40" height="40" style="position:absolute;left:1133px;top:85px"><g fill="none" stroke="#b9b9b9" stroke-width="2.5"><path d="M7 14 V7.5 H13.5 M27.5 7.5 H34 V14 M34 28 V34.5 H27.5 M13.5 34.5 H7 V28"/></g><rect x="12.5" y="13" width="16" height="16" fill="#ececec"/></svg><svg width="20" height="20" style="position:absolute;left:1171px;top:96px"><path d="M3 7.5 l6.5 6.5 6.5 -6.5" fill="none" stroke="#e6e6e6" stroke-width="2"/></svg><div class="t" style="left:1208px;top:92.3px;line-height:28px">Cube</div><div class="panel" style="top:145px;height:561.5px"></div><svg width="24" height="20" style="position:absolute;left:1144px;top:162px"><path d="M3.5 5.5 l8.5 8.5 8.5 -8.5" fill="none" stroke="#d0d0d0" stroke-width="2"/></svg><div class="t" style="left:1174.5px;top:158.3px;line-height:28px">Transform</div><div style="position:absolute;left:2094px;top:168px;width:2.2px;height:2.2px;background:#9c9c9c"></div><div style="position:absolute;left:2100px;top:168px;width:2.2px;height:2.2px;background:#9c9c9c"></div><div style="position:absolute;left:2106px;top:168px;width:2.2px;height:2.2px;background:#9c9c9c"></div><div style="position:absolute;left:2112px;top:168px;width:2.2px;height:2.2px;background:#9c9c9c"></div><div style="position:absolute;left:2094px;top:174px;width:2.2px;height:2.2px;background:#9c9c9c"></div><div style="position:absolute;left:2100px;top:174px;width:2.2px;height:2.2px;background:#9c9c9c"></div><div style="position:absolute;left:2106px;top:174px;width:2.2px;height:2.2px;background:#9c9c9c"></div><div style="position:absolute;left:2112px;top:174px;width:2.2px;height:2.2px;background:#9c9c9c"></div><div class="lbl" style="top:211px;right:631.5px">Location X</div><div class="lbl" style="top:251px;right:631.5px">Y</div><div class="lbl" style="top:291px;right:631.5px">Z</div><div class="lbl" style="top:341px;right:631.5px">Rotation X</div><div class="lbl" style="top:381px;right:631.5px">Y</div><div class="lbl" style="top:421px;right:631.5px">Z</div><div class="lbl" style="top:471px;right:631.5px">Mode</div><div class="lbl" style="top:521px;right:631.5px">Scale X</div><div class="lbl" style="top:561px;right:631.5px">Y</div><div class="lbl" style="top:601px;right:631.5px">Z</div><div class="fld" style="top:212.7px;height:116.5px"></div><div class="div" style="top:249.29999999999998px"></div><div class="div" style="top:289.2px"></div><div class="val" style="top:212.7px">0 m</div><div class="val" style="top:252.39999999999998px">0 m</div><div class="val" style="top:292.1px">0 m</div><div class="fld" style="top:342.8px;height:116.5px"></div><div class="div" style="top:379.40000000000003px"></div><div class="div" style="top:419.3px"></div><div class="val" style="top:342.8px">0°</div><div class="val" style="top:382.5px">0°</div><div class="val" style="top:422.20000000000005px">0°</div><div class="fld" style="top:523px;height:116.5px"></div><div class="div" style="top:559.6px"></div><div class="div" style="top:599.5px"></div><div class="val" style="top:523.0px">1.000</div><div class="val" style="top:562.7px">1.000</div><div class="val" style="top:602.4px">1.000</div><div style="position:absolute;left:1530px;top:473px;width:506px;height:35.5px;background:#282828;border-radius:6px;box-shadow:0 1.5px 0 rgba(0,0,0,.18)"></div><div class="t" style="left:1544px;top:478px;line-height:28px;letter-spacing:0">XYZ Euler</div><svg width="20" height="20" style="position:absolute;left:2014px;top:483px"><path d="M3.5 5 l6.5 6.5 6.5 -6.5" fill="none" stroke="#e6e6e6" stroke-width="2.2"/></svg><svg class="lock" width="30" height="24" viewBox="0 0 30 24" style="position:absolute;left:2041px;top:219px"><path d="M2.2 9 V8.2 A6.7 6.7 0 0 1 15.6 8.2 V11.5" fill="none" stroke="#b3b3b3" stroke-width="1.9"/><rect x="12.6" y="11.8" width="16.8" height="10.5" fill="#3d3d3d" stroke="#b3b3b3" stroke-width="1.9"/><rect x="20.2" y="15.3" width="1.6" height="3.6" fill="#b3b3b3"/></svg><svg class="lock" width="30" height="24" viewBox="0 0 30 24" style="position:absolute;left:2041px;top:259px"><path d="M2.2 9 V8.2 A6.7 6.7 0 0 1 15.6 8.2 V11.5" fill="none" stroke="#b3b3b3" stroke-width="1.9"/><rect x="12.6" y="11.8" width="16.8" height="10.5" fill="#3d3d3d" stroke="#b3b3b3" stroke-width="1.9"/><rect x="20.2" y="15.3" width="1.6" height="3.6" fill="#b3b3b3"/></svg><svg class="lock" width="30" height="24" viewBox="0 0 30 24" style="position:absolute;left:2041px;top:299px"><path d="M2.2 9 V8.2 A6.7 6.7 0 0 1 15.6 8.2 V11.5" fill="none" stroke="#b3b3b3" stroke-width="1.9"/><rect x="12.6" y="11.8" width="16.8" height="10.5" fill="#3d3d3d" stroke="#b3b3b3" stroke-width="1.9"/><rect x="20.2" y="15.3" width="1.6" height="3.6" fill="#b3b3b3"/></svg><svg class="lock" width="30" height="24" viewBox="0 0 30 24" style="position:absolute;left:2041px;top:349px"><path d="M2.2 9 V8.2 A6.7 6.7 0 0 1 15.6 8.2 V11.5" fill="none" stroke="#b3b3b3" stroke-width="1.9"/><rect x="12.6" y="11.8" width="16.8" height="10.5" fill="#3d3d3d" stroke="#b3b3b3" stroke-width="1.9"/><rect x="20.2" y="15.3" width="1.6" height="3.6" fill="#b3b3b3"/></svg><svg class="lock" width="30" height="24" viewBox="0 0 30 24" style="position:absolute;left:2041px;top:389px"><path d="M2.2 9 V8.2 A6.7 6.7 0 0 1 15.6 8.2 V11.5" fill="none" stroke="#b3b3b3" stroke-width="1.9"/><rect x="12.6" y="11.8" width="16.8" height="10.5" fill="#3d3d3d" stroke="#b3b3b3" stroke-width="1.9"/><rect x="20.2" y="15.3" width="1.6" height="3.6" fill="#b3b3b3"/></svg><svg class="lock" width="30" height="24" viewBox="0 0 30 24" style="position:absolute;left:2041px;top:429px"><path d="M2.2 9 V8.2 A6.7 6.7 0 0 1 15.6 8.2 V11.5" fill="none" stroke="#b3b3b3" stroke-width="1.9"/><rect x="12.6" y="11.8" width="16.8" height="10.5" fill="#3d3d3d" stroke="#b3b3b3" stroke-width="1.9"/><rect x="20.2" y="15.3" width="1.6" height="3.6" fill="#b3b3b3"/></svg><svg class="lock" width="30" height="24" viewBox="0 0 30 24" style="position:absolute;left:2041px;top:529px"><path d="M2.2 9 V8.2 A6.7 6.7 0 0 1 15.6 8.2 V11.5" fill="none" stroke="#b3b3b3" stroke-width="1.9"/><rect x="12.6" y="11.8" width="16.8" height="10.5" fill="#3d3d3d" stroke="#b3b3b3" stroke-width="1.9"/><rect x="20.2" y="15.3" width="1.6" height="3.6" fill="#b3b3b3"/></svg><svg class="lock" width="30" height="24" viewBox="0 0 30 24" style="position:absolute;left:2041px;top:569px"><path d="M2.2 9 V8.2 A6.7 6.7 0 0 1 15.6 8.2 V11.5" fill="none" stroke="#b3b3b3" stroke-width="1.9"/><rect x="12.6" y="11.8" width="16.8" height="10.5" fill="#3d3d3d" stroke="#b3b3b3" stroke-width="1.9"/><rect x="20.2" y="15.3" width="1.6" height="3.6" fill="#b3b3b3"/></svg><svg class="lock" width="30" height="24" viewBox="0 0 30 24" style="position:absolute;left:2041px;top:609px"><path d="M2.2 9 V8.2 A6.7 6.7 0 0 1 15.6 8.2 V11.5" fill="none" stroke="#b3b3b3" stroke-width="1.9"/><rect x="12.6" y="11.8" width="16.8" height="10.5" fill="#3d3d3d" stroke="#b3b3b3" stroke-width="1.9"/><rect x="20.2" y="15.3" width="1.6" height="3.6" fill="#b3b3b3"/></svg><div class="dot" style="left:2093.8px;top:227px"></div><div class="dot" style="left:2093.8px;top:267px"></div><div class="dot" style="left:2093.8px;top:307px"></div><div class="dot" style="left:2093.8px;top:357px"></div><div class="dot" style="left:2093.8px;top:397px"></div><div class="dot" style="left:2093.8px;top:437px"></div><div class="dot" style="left:2093.8px;top:487px"></div><div class="dot" style="left:2093.8px;top:537px"></div><div class="dot" style="left:2093.8px;top:577px"></div><div class="dot" style="left:2093.8px;top:617px"></div><svg width="20" height="24" style="position:absolute;left:1174px;top:671px"><path d="M5 3.5 l7.5 8.5 -7.5 8.5" fill="none" stroke="#d0d0d0" stroke-width="2"/></svg><div class="t" style="left:1202px;top:670px;line-height:28px">Delta Transform</div><div class="panel" style="top:710.7px;height:50px"></div><svg width="20" height="24" style="position:absolute;left:1147px;top:724.7px"><path d="M5 3.5 l7.5 8.5 -7.5 8.5" fill="none" stroke="#d0d0d0" stroke-width="2"/></svg><div class="t" style="left:1174.5px;top:723.7px;line-height:28px">Relations</div><div style="position:absolute;left:2094px;top:733.7px;width:2.2px;height:2.2px;background:#9c9c9c"></div><div style="position:absolute;left:2100px;top:733.7px;width:2.2px;height:2.2px;background:#9c9c9c"></div><div style="position:absolute;left:2106px;top:733.7px;width:2.2px;height:2.2px;background:#9c9c9c"></div><div style="position:absolute;left:2112px;top:733.7px;width:2.2px;height:2.2px;background:#9c9c9c"></div><div style="position:absolute;left:2094px;top:739.7px;width:2.2px;height:2.2px;background:#9c9c9c"></div><div style="position:absolute;left:2100px;top:739.7px;width:2.2px;height:2.2px;background:#9c9c9c"></div><div style="position:absolute;left:2106px;top:739.7px;width:2.2px;height:2.2px;background:#9c9c9c"></div><div style="position:absolute;left:2112px;top:739.7px;width:2.2px;height:2.2px;background:#9c9c9c"></div><div class="panel" style="top:764.7px;height:50px"></div><svg width="20" height="24" style="position:absolute;left:1147px;top:778.7px"><path d="M5 3.5 l7.5 8.5 -7.5 8.5" fill="none" stroke="#d0d0d0" stroke-width="2"/></svg><div class="t" style="left:1174.5px;top:777.7px;line-height:28px">Collections</div><div style="position:absolute;left:2094px;top:787.7px;width:2.2px;height:2.2px;background:#9c9c9c"></div><div style="position:absolute;left:2100px;top:787.7px;width:2.2px;height:2.2px;background:#9c9c9c"></div><div style="position:absolute;left:2106px;top:787.7px;width:2.2px;height:2.2px;background:#9c9c9c"></div><div style="position:absolute;left:2112px;top:787.7px;width:2.2px;height:2.2px;background:#9c9c9c"></div><div style="position:absolute;left:2094px;top:793.7px;width:2.2px;height:2.2px;background:#9c9c9c"></div><div style="position:absolute;left:2100px;top:793.7px;width:2.2px;height:2.2px;background:#9c9c9c"></div><div style="position:absolute;left:2106px;top:793.7px;width:2.2px;height:2.2px;background:#9c9c9c"></div><div style="position:absolute;left:2112px;top:793.7px;width:2.2px;height:2.2px;background:#9c9c9c"></div><div class="panel" style="top:818.7px;height:50px"></div><svg width="20" height="24" style="position:absolute;left:1147px;top:832.7px"><path d="M5 3.5 l7.5 8.5 -7.5 8.5" fill="none" stroke="#d0d0d0" stroke-width="2"/></svg><div class="t" style="left:1174.5px;top:831.7px;line-height:28px">Instancing</div><div style="position:absolute;left:2094px;top:841.7px;width:2.2px;height:2.2px;background:#9c9c9c"></div><div style="position:absolute;left:2100px;top:841.7px;width:2.2px;height:2.2px;background:#9c9c9c"></div><div style="position:absolute;left:2106px;top:841.7px;width:2.2px;height:2.2px;background:#9c9c9c"></div><div style="position:absolute;left:2112px;top:841.7px;width:2.2px;height:2.2px;background:#9c9c9c"></div><div style="position:absolute;left:2094px;top:847.7px;width:2.2px;height:2.2px;background:#9c9c9c"></div><div style="position:absolute;left:2100px;top:847.7px;width:2.2px;height:2.2px;background:#9c9c9c"></div><div style="position:absolute;left:2106px;top:847.7px;width:2.2px;height:2.2px;background:#9c9c9c"></div><div style="position:absolute;left:2112px;top:847.7px;width:2.2px;height:2.2px;background:#9c9c9c"></div><div class="panel" style="top:872.7px;height:50px"></div><svg width="20" height="24" style="position:absolute;left:1147px;top:886.7px"><path d="M5 3.5 l7.5 8.5 -7.5 8.5" fill="none" stroke="#d0d0d0" stroke-width="2"/></svg><div class="t" style="left:1174.5px;top:885.7px;line-height:28px">Motion Paths</div><div style="position:absolute;left:2094px;top:895.7px;width:2.2px;height:2.2px;background:#9c9c9c"></div><div style="position:absolute;left:2100px;top:895.7px;width:2.2px;height:2.2px;background:#9c9c9c"></div><div style="position:absolute;left:2106px;top:895.7px;width:2.2px;height:2.2px;background:#9c9c9c"></div><div style="position:absolute;left:2112px;top:895.7px;width:2.2px;height:2.2px;background:#9c9c9c"></div><div style="position:absolute;left:2094px;top:901.7px;width:2.2px;height:2.2px;background:#9c9c9c"></div><div style="position:absolute;left:2100px;top:901.7px;width:2.2px;height:2.2px;background:#9c9c9c"></div><div style="position:absolute;left:2106px;top:901.7px;width:2.2px;height:2.2px;background:#9c9c9c"></div><div style="position:absolute;left:2112px;top:901.7px;width:2.2px;height:2.2px;background:#9c9c9c"></div><div class="panel" style="top:926.7px;height:50px"></div><svg width="20" height="24" style="position:absolute;left:1147px;top:940.7px"><path d="M5 3.5 l7.5 8.5 -7.5 8.5" fill="none" stroke="#d0d0d0" stroke-width="2"/></svg><div class="t" style="left:1174.5px;top:939.7px;line-height:28px">Shading</div><div style="position:absolute;left:2094px;top:949.7px;width:2.2px;height:2.2px;background:#9c9c9c"></div><div style="position:absolute;left:2100px;top:949.7px;width:2.2px;height:2.2px;background:#9c9c9c"></div><div style="position:absolute;left:2106px;top:949.7px;width:2.2px;height:2.2px;background:#9c9c9c"></div><div style="position:absolute;left:2112px;top:949.7px;width:2.2px;height:2.2px;background:#9c9c9c"></div><div style="position:absolute;left:2094px;top:955.7px;width:2.2px;height:2.2px;background:#9c9c9c"></div><div style="position:absolute;left:2100px;top:955.7px;width:2.2px;height:2.2px;background:#9c9c9c"></div><div style="position:absolute;left:2106px;top:955.7px;width:2.2px;height:2.2px;background:#9c9c9c"></div><div style="position:absolute;left:2112px;top:955.7px;width:2.2px;height:2.2px;background:#9c9c9c"></div><div class="panel" style="top:980.7px;height:50px"></div><svg width="20" height="24" style="position:absolute;left:1147px;top:994.7px"><path d="M5 3.5 l7.5 8.5 -7.5 8.5" fill="none" stroke="#d0d0d0" stroke-width="2"/></svg><div class="t" style="left:1174.5px;top:993.7px;line-height:28px">Visibility</div><div style="position:absolute;left:2094px;top:1003.7px;width:2.2px;height:2.2px;background:#9c9c9c"></div><div style="position:absolute;left:2100px;top:1003.7px;width:2.2px;height:2.2px;background:#9c9c9c"></div><div style="position:absolute;left:2106px;top:1003.7px;width:2.2px;height:2.2px;background:#9c9c9c"></div><div style="position:absolute;left:2112px;top:1003.7px;width:2.2px;height:2.2px;background:#9c9c9c"></div><div style="position:absolute;left:2094px;top:1009.7px;width:2.2px;height:2.2px;background:#9c9c9c"></div><div style="position:absolute;left:2100px;top:1009.7px;width:2.2px;height:2.2px;background:#9c9c9c"></div><div style="position:absolute;left:2106px;top:1009.7px;width:2.2px;height:2.2px;background:#9c9c9c"></div><div style="position:absolute;left:2112px;top:1009.7px;width:2.2px;height:2.2px;background:#9c9c9c"></div><div class="panel" style="top:1034.7px;height:50px"></div><svg width="20" height="24" style="position:absolute;left:1147px;top:1048.7px"><path d="M5 3.5 l7.5 8.5 -7.5 8.5" fill="none" stroke="#d0d0d0" stroke-width="2"/></svg><div class="t" style="left:1174.5px;top:1047.7px;line-height:28px">Viewport Display</div><div style="position:absolute;left:2094px;top:1057.7px;width:2.2px;height:2.2px;background:#9c9c9c"></div><div style="position:absolute;left:2100px;top:1057.7px;width:2.2px;height:2.2px;background:#9c9c9c"></div><div style="position:absolute;left:2106px;top:1057.7px;width:2.2px;height:2.2px;background:#9c9c9c"></div><div style="position:absolute;left:2112px;top:1057.7px;width:2.2px;height:2.2px;background:#9c9c9c"></div><div style="position:absolute;left:2094px;top:1063.7px;width:2.2px;height:2.2px;background:#9c9c9c"></div><div style="position:absolute;left:2100px;top:1063.7px;width:2.2px;height:2.2px;background:#9c9c9c"></div><div style="position:absolute;left:2106px;top:1063.7px;width:2.2px;height:2.2px;background:#9c9c9c"></div><div style="position:absolute;left:2112px;top:1063.7px;width:2.2px;height:2.2px;background:#9c9c9c"></div><div class="panel" style="top:1088.7px;height:50px"></div><svg width="20" height="24" style="position:absolute;left:1147px;top:1102.7px"><path d="M5 3.5 l7.5 8.5 -7.5 8.5" fill="none" stroke="#d0d0d0" stroke-width="2"/></svg><div class="t" style="left:1174.5px;top:1101.7px;line-height:28px">Line Art</div><div style="position:absolute;left:2094px;top:1111.7px;width:2.2px;height:2.2px;background:#9c9c9c"></div><div style="position:absolute;left:2100px;top:1111.7px;width:2.2px;height:2.2px;background:#9c9c9c"></div><div style="position:absolute;left:2106px;top:1111.7px;width:2.2px;height:2.2px;background:#9c9c9c"></div><div style="position:absolute;left:2112px;top:1111.7px;width:2.2px;height:2.2px;background:#9c9c9c"></div><div style="position:absolute;left:2094px;top:1117.7px;width:2.2px;height:2.2px;background:#9c9c9c"></div><div style="position:absolute;left:2100px;top:1117.7px;width:2.2px;height:2.2px;background:#9c9c9c"></div><div style="position:absolute;left:2106px;top:1117.7px;width:2.2px;height:2.2px;background:#9c9c9c"></div><div style="position:absolute;left:2112px;top:1117.7px;width:2.2px;height:2.2px;background:#9c9c9c"></div><div class="panel" style="top:1142.7px;height:50px"></div><svg width="20" height="24" style="position:absolute;left:1147px;top:1156.7px"><path d="M5 3.5 l7.5 8.5 -7.5 8.5" fill="none" stroke="#d0d0d0" stroke-width="2"/></svg><div class="t" style="left:1174.5px;top:1155.7px;line-height:28px">Animation</div><div style="position:absolute;left:2094px;top:1165.7px;width:2.2px;height:2.2px;background:#9c9c9c"></div><div style="position:absolute;left:2100px;top:1165.7px;width:2.2px;height:2.2px;background:#9c9c9c"></div><div style="position:absolute;left:2106px;top:1165.7px;width:2.2px;height:2.2px;background:#9c9c9c"></div><div style="position:absolute;left:2112px;top:1165.7px;width:2.2px;height:2.2px;background:#9c9c9c"></div><div style="position:absolute;left:2094px;top:1171.7px;width:2.2px;height:2.2px;background:#9c9c9c"></div><div style="position:absolute;left:2100px;top:1171.7px;width:2.2px;height:2.2px;background:#9c9c9c"></div><div style="position:absolute;left:2106px;top:1171.7px;width:2.2px;height:2.2px;background:#9c9c9c"></div><div style="position:absolute;left:2112px;top:1171.7px;width:2.2px;height:2.2px;background:#9c9c9c"></div><div style="position:absolute;left:2137.3px;top:0px;width:2.7px;height:1175px;background:#3c3c3c;border-radius:0 0 2px 2px"></div></body></html>
